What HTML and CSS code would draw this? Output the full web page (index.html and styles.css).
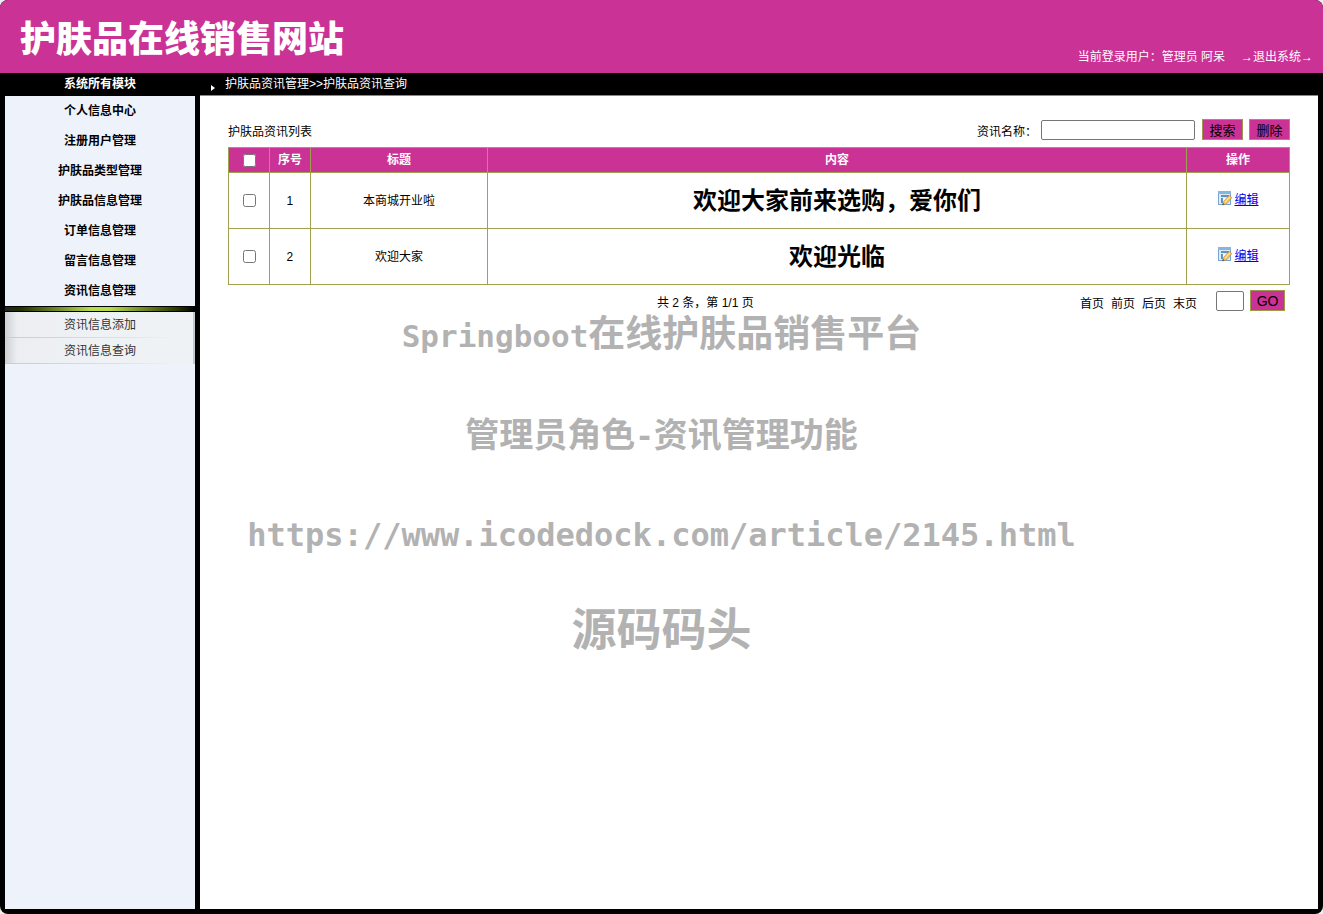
FILE: index.html
```html
<!DOCTYPE html>
<html lang="zh-CN">
<head>
<meta charset="utf-8">
<title>护肤品在线销售网站</title>
<link rel="stylesheet" href="styles.css">
</head>
<body>
<svg class="sprite" aria-hidden="true">
  <symbol id="edit" viewBox="0 0 14 15">
    <rect x="0" y="0" width="13" height="14" fill="#78a6d3"/>
    <rect x="1" y="3" width="11" height="10" fill="#dcebf8"/>
    <path d="M0 0h13v3H0z" fill="#86b5de"/>
    <path d="M3 4h8v2H3zM3 7h2v5H3z" fill="#5f91c4"/>
    <path d="M5 7h5v5H5z" fill="#f5faff"/>
    <path d="M11 4.500l3 2-5.500 6.500-3.500 1 .5-3.500z" fill="#f5bd51" stroke="#b9812c" stroke-width=".5"/>
    <path d="M11.300 5.500l1 .8-4.800 5.500-1-.8z" fill="#ffe4a0"/>
    <path d="M4.800 12l1.700 1.300-2.500 1z" fill="#4a4a4a"/>
  </symbol>
</svg>
<div class="frame">
  <header class="header">
    <h1 class="title">护肤品在线销售网站</h1>
    <div class="user"><span>当前登录用户：管理员 阿呆</span><a href="#">→退出系统→</a></div>
  </header>
  <div class="body">
    <aside class="side">
      <h2 class="side-head">系统所有模块</h2>
      <nav class="menu">
        <a class="item" href="#">个人信息中心</a>
        <a class="item" href="#">注册用户管理</a>
        <a class="item" href="#">护肤品类型管理</a>
        <a class="item" href="#">护肤品信息管理</a>
        <a class="item" href="#">订单信息管理</a>
        <a class="item" href="#">留言信息管理</a>
        <a class="item" href="#">资讯信息管理</a>
        <div class="submenu">
          <a class="subitem" href="#">资讯信息添加</a>
          <a class="subitem" href="#">资讯信息查询</a>
        </div>
      </nav>
    </aside>
    <main class="main">
      <div class="crumb"><svg class="arrow" viewBox="0 0 4 6"><path d="M0 0l4 3-4 3z" fill="#fff"/></svg>护肤品资讯管理&gt;&gt;护肤品资讯查询</div>
      <div class="panel">
        <div class="content">
          <form class="tools">
            <span class="list-title">护肤品资讯列表</span>
            <label for="name">资讯名称：</label>
            <input class="field search" id="name" type="text">
            <button class="btn" type="button">搜索</button>
            <button class="btn" type="button">删除</button>
          </form>
          <table class="grid">
            <colgroup><col class="c-small"><col class="c-small"><col class="c-title"><col><col class="c-op"></colgroup>
            <thead>
              <tr><th><input type="checkbox" aria-label="全选"></th><th>序号</th><th>标题</th><th>内容</th><th>操作</th></tr>
            </thead>
            <tbody>
              <tr><td><input type="checkbox" aria-label="选择 1"></td><td>1</td><td>本商城开业啦</td><td class="big">欢迎大家前来选购，爱你们</td><td><span class="op"><svg class="icon"><use href="#edit"/></svg><a href="#">编辑</a></span></td></tr>
              <tr><td><input type="checkbox" aria-label="选择 2"></td><td>2</td><td>欢迎大家</td><td class="big">欢迎光临</td><td><span class="op"><svg class="icon"><use href="#edit"/></svg><a href="#">编辑</a></span></td></tr>
            </tbody>
          </table>
          <form class="pager">
            <span class="count">共 2 条，第 1/1 页</span>
            <div class="pages"><a href="#">首页</a><a href="#">前页</a><a href="#">后页</a><a href="#">末页</a></div>
            <input class="field page" type="text" aria-label="页码">
            <button class="btn go" type="button">GO</button>
          </form>
        </div>
      </div>
    </main>
  </div>
  <div class="watermark">
    <p class="w1"><span class="latin">Springboot</span>在线护肤品销售平台</p>
    <p class="w2">管理员角色<span class="latin">-</span>资讯管理功能</p>
    <p class="w3">https://www.icodedock.com/article/2145.html</p>
    <p class="w4">源码码头</p>
  </div>
</div>
</body>
</html>
```
FILE: styles.css
```css
* { box-sizing: border-box; }
body {
  margin: 0;
  background: #eee;
  color: #000;
  font: 12px/16px "Liberation Sans", "Noto Sans CJK SC", sans-serif;
}
h1, h2, p { margin: 0; }
a { color: inherit; text-decoration: none; }
input { margin: 0; }
.sprite { display: none; }

.frame {
  position: relative;
  display: flex;
  flex-direction: column;
  min-height: 100vh;
  background: #000;
  border-radius: 8px;
  overflow: hidden;
}
.header {
  display: flex;
  justify-content: space-between;
  align-items: flex-end;
  height: 73px;
  padding: 0 10px 8px 20px;
  background: #cb3296;
  color: #fff;
}
.title { font-size: 36px; font-weight: 900; line-height: 50px; }
.user { display: flex; gap: 16px; }

.body {
  flex: 1;
  display: flex;
  gap: 5px;
  padding: 0 5px 5px;
}
.side { display: flex; flex-direction: column; width: 190px; text-align: center; }
.side-head { height: 23px; color: #fff; font-size: 12px; line-height: 22px; }
.menu { flex: 1; background: #eef2fb; }
.item { display: block; font-weight: bold; line-height: 30px; }
.submenu {
  border-right: 2px solid #c3c9d0;
  background: linear-gradient(90deg, #cdcfd3, #eceef1 12px, #eff2f4 50%, #eef2f6);
}
.submenu::before {
  content: "";
  display: block;
  height: 4px;
  margin-right: -2px;
  border: solid #000;
  border-width: 1px 0;
  background: linear-gradient(90deg, #222, #243000 8%, #b6dc4c 45%, #b6dc4c 55%, #2c3a00 90%, #000);
}
.subitem {
  display: block;
  height: 26px;
  border-bottom: 1px solid;
  border-image: linear-gradient(90deg, #c8ccd0, #dde0e4 60%, #eef2f6 90%) 0 0 1 0;
  padding-left: 2px;
  color: #333;
  line-height: 26px;
}

.main { flex: 1; display: flex; flex-direction: column; }
.crumb {
  display: flex;
  align-items: center;
  gap: 10px;
  height: 23px;
  padding: 0 11px 1px;
  border-bottom: 1px solid #888;
  color: #fff;
}
.arrow { width: 4px; height: 6px; margin-top: 8px; }
.panel { flex: 1; padding-top: 23px; background: #fff; }
.content { width: 95%; margin: 0 auto; }
.tools { display: flex; align-items: center; height: 28px; padding-bottom: 7px; }
.list-title { flex: 1; padding-top: 4px; }
.tools label { padding-top: 5px; }
.field {
  height: 20px;
  border: 1px solid #767676;
  border-radius: 2px;
  background: #fff;
  font-size: 13px;
}
.search { width: 154px; margin: 0 7px 0 4px; }
.btn {
  width: 41px;
  height: 21px;
  padding: 2px 0 0;
  border: 1px solid #a0974e;
  background: #cb3296;
  color: #000;
  font: 13px/16px "Liberation Sans", "Noto Sans CJK SC", sans-serif;
}
.btn + .btn { margin-left: 6px; }

.grid { width: 100%; border-collapse: collapse; table-layout: fixed; text-align: center; }
.grid th, .grid td { padding: 0; border: 1px solid #a0a050; }
.grid th { height: 25px; background: #cb3296; color: #fff; }
.grid td { height: 56px; }
.grid input { display: block; width: 13px; height: 13px; margin: 0 auto; }
.grid th:first-child, .grid td:first-child { padding-left: 1px; }
.c-small { width: 41px; }
.c-title { width: 177px; }
.c-op { width: 103px; }
.grid .big { font-size: 24px; font-weight: bold; line-height: 32px; }
.op { display: inline-flex; gap: 3px; }
.op a { padding-top: 1px; color: #00e; text-decoration: underline; }
.icon { width: 14px; height: 15px; }

.pager { display: flex; align-items: center; height: 31px; padding-right: 5px; }
.count { flex: 1; padding: 5px 0 0 429px; }
.pages { display: flex; gap: 7px; padding-top: 6px; }
.page { width: 28px; margin: 0 6px 0 19px; }
.go { width: 35px; padding: 0; font-size: 14px; }

.watermark {
  position: absolute;
  top: 308px;
  left: 0;
  right: 0;
  display: grid;
  gap: 46px;
  color: #b2b2b2;
  font-weight: bold;
  line-height: 54px;
  text-align: center;
  white-space: nowrap;
  pointer-events: none;
}
.watermark p { height: 54px; }
.w1 { font-size: 37px; }
.w2 { font-size: 34px; }
.w3 { font-family: "DejaVu Sans Mono", monospace; font-size: 32px; }
.watermark .w4 { font-size: 45px; line-height: 46px; }
.latin { font-family: "DejaVu Sans Mono", monospace; font-size: 31px; }
```
